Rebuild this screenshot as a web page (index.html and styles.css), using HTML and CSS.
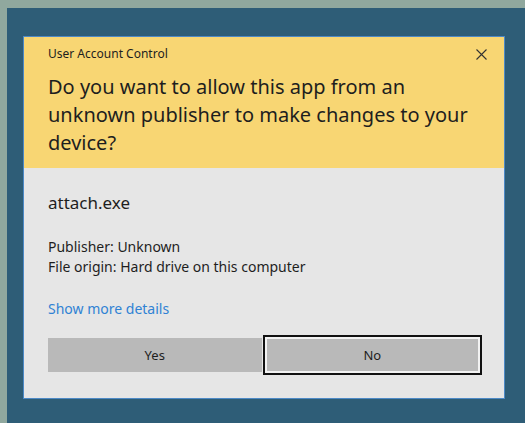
FILE: index.html
```html
<!DOCTYPE html>
<html lang="en">
<head>
<meta charset="utf-8">
<title>User Account Control</title>
<link rel="stylesheet" href="styles.css">
</head>
<body>
<div class="desktop">
  <div class="backdrop">
    <div class="dialog" role="dialog" aria-labelledby="uac-question">
      <header class="header">
        <div class="title-row">
          <span class="title">User Account Control</span>
          <button class="close" aria-label="Close">
            <svg width="11" height="11" viewBox="0 0 11 11" aria-hidden="true">
              <path d="M0.5 0.5 L10.5 10.5 M10.5 0.5 L0.5 10.5" stroke="#333" stroke-width="1.1" fill="none"/>
            </svg>
          </button>
        </div>
        <h1 class="question" id="uac-question">Do you want to allow this app from an unknown publisher to make changes to your device?</h1>
      </header>
      <section class="content">
        <div class="app-name">attach.exe</div>
        <div class="meta">
          <div>Publisher: Unknown</div>
          <div>File origin: Hard drive on this computer</div>
        </div>
        <a class="details" href="#">Show more details</a>
        <div class="actions">
          <button class="btn">Yes</button>
          <button class="btn btn-focus">No</button>
        </div>
      </section>
    </div>
  </div>
</div>
</body>
</html>
```
FILE: styles.css
```css
html, body {
  margin: 0;
  padding: 0;
}

body {
  background: #90a89e;
  font-family: "Noto Sans", "Open Sans", sans-serif;
  color: #1e1e1e;
}

.desktop {
  width: 525px;
  height: 423px;
  padding: 8px 0 0 7px;
  box-sizing: border-box;
  overflow: hidden;
}

.backdrop {
  background: #2e5d77;
  height: 100%;
  padding: 28px 0 0 16px;
  box-sizing: border-box;
}

.dialog {
  width: 482px;
  height: 363px;
  box-sizing: border-box;
  border: 1px solid #4d89c6;
  display: flex;
  flex-direction: column;
}

.header {
  background: #f8d673;
  padding: 9px 25px 11px 24px;
}

.title-row {
  display: flex;
  align-items: center;
  justify-content: space-between;
  height: 16px;
}

.title {
  font-size: 12px;
  line-height: 16px;
}

.close {
  border: 0;
  background: none;
  padding: 0;
  margin: 1px -8px 0 0;
  width: 11px;
  height: 11px;
  display: flex;
}

.question {
  margin: 11px 0 0 0;
  font-size: 20px;
  line-height: 28px;
  font-weight: normal;
}

.content {
  flex: 1;
  background: #e6e6e6;
  padding: 23px 25px 0 24px;
  display: flex;
  flex-direction: column;
  align-items: flex-start;
}

.app-name {
  font-size: 17px;
  line-height: 24px;
}

.meta {
  margin-top: 22px;
  font-size: 14px;
  line-height: 20px;
}

.details {
  margin-top: 22px;
  font-size: 14px;
  line-height: 20px;
  color: #3082d4;
  text-decoration: none;
}

.actions {
  margin-top: 19px;
  align-self: stretch;
  display: flex;
  gap: 4px;
}

.btn {
  flex: 1;
  height: 34px;
  border: 0;
  background: #b9b9b9;
  font-family: inherit;
  font-size: 13px;
  color: #1e1e1e;
  padding: 0;
}

.btn-focus {
  box-shadow: inset 0 0 0 1px #f2f2f2, 0 0 0 1px #f2f2f2;
  outline: 2px solid #111;
  outline-offset: 1px;
}
```
